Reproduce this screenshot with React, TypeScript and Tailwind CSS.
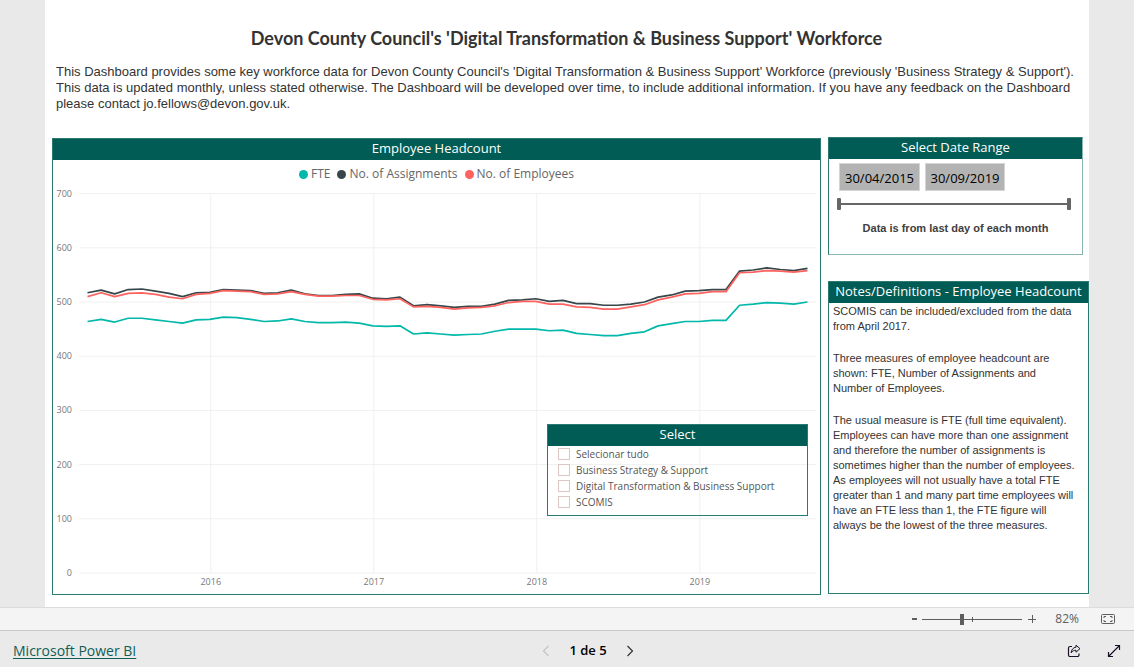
import { useState, type ReactNode } from "react";

const UI_FONT = "font-['Open_Sans','Noto_Sans',sans-serif]";
const BODY_FONT = "font-['Liberation_Sans',Arial,sans-serif]";

type Series = { name: string; color: string; dot: string; values: number[] };

// Month-end values, March 2015 to August 2019
const SERIES: Series[] = [
  {
    name: "FTE",
    color: "#01B8AA",
    dot: "bg-[#01B8AA]",
    values: [
      464, 468, 463, 470, 470, 467, 464, 461, 467, 468, 472, 471, 468, 464, 465, 469, 464, 462,
      462, 463, 461, 456, 455, 456, 441, 443, 441, 439, 440, 441, 446, 450, 450, 450, 447, 448,
      442, 440, 438, 438, 442, 445, 456, 460, 464, 464, 466, 466, 494, 496, 499, 498, 496, 500,
    ],
  },
  {
    name: "No. of Assignments",
    color: "#374649",
    dot: "bg-[#374649]",
    values: [
      517, 522, 515, 523, 524, 520, 516, 510, 517, 518, 523, 522, 521, 516, 517, 522, 515, 512,
      512, 514, 515, 507, 506, 509, 493, 495, 493, 490, 492, 492, 496, 503, 504, 506, 501, 503,
      497, 497, 494, 494, 496, 500, 509, 513, 520, 521, 523, 523, 557, 559, 563, 560, 558, 562,
    ],
  },
  {
    name: "No. of Employees",
    color: "#FD625E",
    dot: "bg-[#FD625E]",
    values: [
      510, 517, 510, 516, 517, 514, 509, 506, 514, 516, 521, 520, 519, 514, 515, 519, 514, 511,
      511, 512, 512, 505, 504, 506, 491, 492, 490, 487, 489, 490, 493, 499, 501, 501, 496, 496,
      491, 490, 487, 487, 491, 495, 504, 509, 515, 516, 519, 519, 554, 555, 558, 557, 555, 558,
    ],
  },
];

const Y_TICKS = [0, 100, 200, 300, 400, 500, 600, 700];
const YEARS = [
  { label: "2016", month: 9 },
  { label: "2017", month: 21 },
  { label: "2018", month: 33 },
  { label: "2019", month: 45 },
];

const OPTIONS = ["Selecionar tudo", "Business Strategy & Support", "Digital Transformation & Business Support", "SCOMIS"];

const xAt = (month: number) => 34.5 + (month * 720) / 53;
const yAt = (value: number) => 385 - value * 0.542;

function PanelTitle({ children }: { children: ReactNode }) {
  return <h2 className="h-[21px] bg-[#015C55] text-center text-[13px] leading-[19px] text-white">{children}</h2>;
}

function HeadcountChart() {
  return (
    <svg viewBox="0 0 767 406" className="block w-full" role="img" aria-label="Employee Headcount">
      {Y_TICKS.map((t) => (
        <g key={t}>
          <line x1="26" x2="763" y1={yAt(t)} y2={yAt(t)} stroke="#F0F0F0" />
          <text x="19" y={yAt(t) + 3} textAnchor="end" fontSize="9" fill="#777777">{t}</text>
        </g>
      ))}
      {YEARS.map((y) => (
        <g key={y.label}>
          <line x1={xAt(y.month) + 1} x2={xAt(y.month) + 1} y1="5" y2="385" stroke="#F0F0F0" />
          <text x={xAt(y.month) + 1} y="397" textAnchor="middle" fontSize="9" fill="#777777">{y.label}</text>
        </g>
      ))}
      {SERIES.map((s) => (
        <polyline
          key={s.name}
          points={s.values.map((v, i) => `${xAt(i)},${yAt(v)}`).join(" ")}
          fill="none"
          stroke={s.color}
          strokeWidth="1.7"
          strokeLinejoin="round"
        />
      ))}
    </svg>
  );
}

function SelectFilter() {
  const [checked, setChecked] = useState<string[]>([]);
  const toggle = (o: string) => setChecked((c) => (c.includes(o) ? c.filter((x) => x !== o) : [...c, o]));
  return (
    <section className="absolute right-3 bottom-[78px] w-[261px] border border-[#2A7A72]">
      <PanelTitle>Select</PanelTitle>
      <div className="flex flex-col pb-[5px] pl-[10px]">
        {OPTIONS.map((o) => (
          <label key={o} className="flex h-4 items-center gap-[6px] text-[10px] text-[#555555]">
            <input
              type="checkbox"
              checked={checked.includes(o)}
              onChange={() => toggle(o)}
              className="size-3 appearance-none border border-[#D9C8C2] checked:bg-[#666666]"
            />
            {o}
          </label>
        ))}
      </div>
    </section>
  );
}

const HANDLE =
  "pointer-events-none absolute inset-0 h-3 w-full appearance-none bg-transparent [&::-webkit-slider-thumb]:pointer-events-auto [&::-webkit-slider-thumb]:h-3 [&::-webkit-slider-thumb]:w-1 [&::-webkit-slider-thumb]:appearance-none [&::-webkit-slider-thumb]:rounded-[1px] [&::-webkit-slider-thumb]:bg-[#666666]";

function DateRange() {
  const [from, setFrom] = useState("30/04/2015");
  const [to, setTo] = useState("30/09/2019");
  const field = "h-7 border border-[#D5D5D5] bg-[#B3B3B3] pt-[2px] text-center text-[13px] text-black";
  return (
    <section className="mr-[6px] border border-[#2A7A72] border-r-[#8AB5B1] border-b-[#8AB5B1]">
      <PanelTitle>Select Date Range</PanelTitle>
      <div className="flex gap-[5px] pt-1 pl-[10px]">
        <input aria-label="Start date" value={from} onChange={(e) => setFrom(e.target.value)} className={`w-[81px] ${field}`} />
        <input aria-label="End date" value={to} onChange={(e) => setTo(e.target.value)} className={`w-[80px] ${field}`} />
      </div>
      <div className="relative mt-[7px] mr-[11px] ml-2 h-3">
        <div className="h-[7px] border-b-2 border-[#666666]" />
        <input type="range" aria-label="Range start" defaultValue={0} className={HANDLE} />
        <input type="range" aria-label="Range end" defaultValue={100} className={HANDLE} />
      </div>
      <p className={`mt-[10px] mb-[18px] text-center text-[11px] leading-[16px] font-bold text-[#404040] ${BODY_FONT}`}>
        Data is from last day of each month
      </p>
    </section>
  );
}

function Notes() {
  return (
    <section className="mt-[26px] border border-[#2A7A72] pb-[60px]">
      <PanelTitle>Notes/Definitions - Employee Headcount</PanelTitle>
      <div className={`space-y-[17px] pt-px pl-1 text-[11px] leading-[15px] text-[#333333] ${BODY_FONT}`}>
        <p>
          SCOMIS can be included/excluded from the data<br />
          from April 2017.
        </p>
        <p>
          Three measures of employee headcount are<br />
          shown: FTE, Number of Assignments and<br />
          Number of Employees.
        </p>
        <p className="whitespace-nowrap">
          The usual measure is FTE (full time equivalent).<br />
          Employees can have more than one assignment<br />
          and therefore the number of assignments is<br />
          sometimes higher than the number of employees.<br />
          As employees will not usually have a total FTE<br />
          greater than 1 and many part time employees will<br />
          have an FTE less than 1, the FTE figure will<br />
          always be the lowest of the three measures.
        </p>
      </div>
    </section>
  );
}

function ZoomBar() {
  const [zoom, setZoom] = useState(82);
  return (
    <div className="flex h-[23px] items-center justify-end border-t border-[#DCDCDC] bg-[#F4F4F4] pr-[18px] text-[#605E5C]">
      <button aria-label="Zoom out" onClick={() => setZoom(zoom - 10)} className="w-3">
        <svg viewBox="0 0 12 12" className="size-3"><path d="M4 6h5" stroke="currentColor" strokeWidth="2" /></svg>
      </button>
      <div className="relative ml-[2px] flex h-[11px] w-[100px] items-center">
        <div className="h-px w-full bg-[#605E5C]" />
        <span className="absolute top-[3px] left-1/2 h-[5px] w-px bg-[#605E5C]" />
        <input
          type="range"
          aria-label="Zoom"
          min={10}
          max={192}
          value={zoom}
          onChange={(e) => setZoom(Number(e.target.value))}
          className="absolute inset-0 h-[11px] w-full appearance-none bg-transparent [&::-webkit-slider-thumb]:h-[11px] [&::-webkit-slider-thumb]:w-1 [&::-webkit-slider-thumb]:appearance-none [&::-webkit-slider-thumb]:bg-[#605E5C]"
        />
      </div>
      <button aria-label="Zoom in" onClick={() => setZoom(zoom + 10)} className="ml-1 w-3">
        <svg viewBox="0 0 12 12" className="size-3" shapeRendering="crispEdges"><path d="M2 6.5h8M6.5 2v8" stroke="currentColor" /></svg>
      </button>
      <span className="w-[41px] text-right text-[12px]">{zoom}%</span>
      <button aria-label="Fit to page" className="ml-[21px]">
        <svg viewBox="0 0 16 12" className="h-3 w-4" fill="none" stroke="currentColor">
          <rect x="1.5" y="1.5" width="13" height="9" rx="1" />
          <path d="M4 5V3.500h2M10 3.500h2V5M12 7v1.500h-2M6 8.500H4V7" />
        </svg>
      </button>
    </div>
  );
}

function Footer() {
  return (
    <footer className="grid h-[37px] grid-cols-3 items-center border-t border-[#C8C8C8] bg-[#EAEAEA] px-[13px] pt-[3px]">
      <a href="#" className="justify-self-start text-[14px] leading-[18px] text-[#0F5F58] underline underline-offset-2">Microsoft Power BI</a>
      <div className="ml-[42px] flex items-center justify-self-center text-[13px] font-semibold text-black">
        <button aria-label="Previous page" disabled className="text-[#C4C4C4]">
          <svg viewBox="0 0 8 12" className="h-3 w-2" fill="none" stroke="currentColor" strokeWidth="1.200"><path d="M6.500 1L1.500 6l5 5" /></svg>
        </button>
        <span className="px-[19px]">1 de 5</span>
        <button aria-label="Next page" className="text-[#333333]">
          <svg viewBox="0 0 8 12" className="h-3 w-2" fill="none" stroke="currentColor" strokeWidth="1.200"><path d="M1.500 1l5 5-5 5" /></svg>
        </button>
      </div>
      <div className="flex items-center gap-[26px] justify-self-end text-[#1B1026]">
        <button aria-label="Share">
          <svg viewBox="0 0 14 14" className="size-[14px]" fill="none" stroke="currentColor" strokeLinejoin="round">
            <path d="M5 2.500H3a1.500 1.500 0 0 0-1.500 1.500v7A1.500 1.500 0 0 0 3 12.500h7.500A1.500 1.500 0 0 0 12 11V9.500" strokeWidth="1.200" />
            <path d="M9 1.200L13 4.700 9 8.200V6.300C6.800 6.200 5.300 7 4.200 8.800 4.400 5.500 6.200 3.500 9 3.200z" />
          </svg>
        </button>
        <button aria-label="Full screen">
          <svg viewBox="0 0 14 14" className="size-[14px]" fill="none" stroke="currentColor" strokeWidth="1.200">
            <path d="M1.500 12.500l11-11M8 1.500h4.500V6M1.500 8v4.500H6" />
          </svg>
        </button>
      </div>
    </footer>
  );
}

export default function App() {
  return (
    <div className={`flex min-h-screen flex-col bg-[#E9E9E9] ${UI_FONT}`}>
      <main className="mx-[45px] flex-1 bg-white pl-[7px]">
        <h1 className="pt-[25px] pr-2 text-center font-['Lato','Open_Sans',sans-serif] text-[18px] leading-[26px] font-bold text-[#333333]">
          Devon County Council's 'Digital Transformation &amp; Business Support' Workforce
        </h1>
        <p className={`mt-[13px] pl-1 text-[13px] leading-4 text-[#333333] ${BODY_FONT}`}>
          This Dashboard provides some key workforce data for Devon County Council's 'Digital Transformation &amp; Business Support' Workforce (previously 'Business Strategy &amp; Support').<br />
          This data is updated monthly, unless stated otherwise. The Dashboard will be developed over time, to include additional information. If you have any feedback on the Dashboard<br />
          please contact jo.fellows@devon.gov.uk.
        </p>
        <div className="mt-[25px] flex items-start gap-[7px]">
          <section className="relative mt-px flex-1 border border-[#2A7A72]">
            <PanelTitle>Employee Headcount</PanelTitle>
            <ul className="flex h-7 items-center justify-center gap-[7px] text-[12px] text-[#666666]">
              {SERIES.map((s) => (
                <li key={s.name} className="flex items-center gap-[3px]">
                  <span className={`size-[9px] rounded-full ${s.dot}`} />
                  {s.name}
                </li>
              ))}
            </ul>
            <HeadcountChart />
            <SelectFilter />
          </section>
          <aside className="w-[261px]">
            <DateRange />
            <Notes />
          </aside>
        </div>
      </main>
      <ZoomBar />
      <Footer />
    </div>
  );
}
